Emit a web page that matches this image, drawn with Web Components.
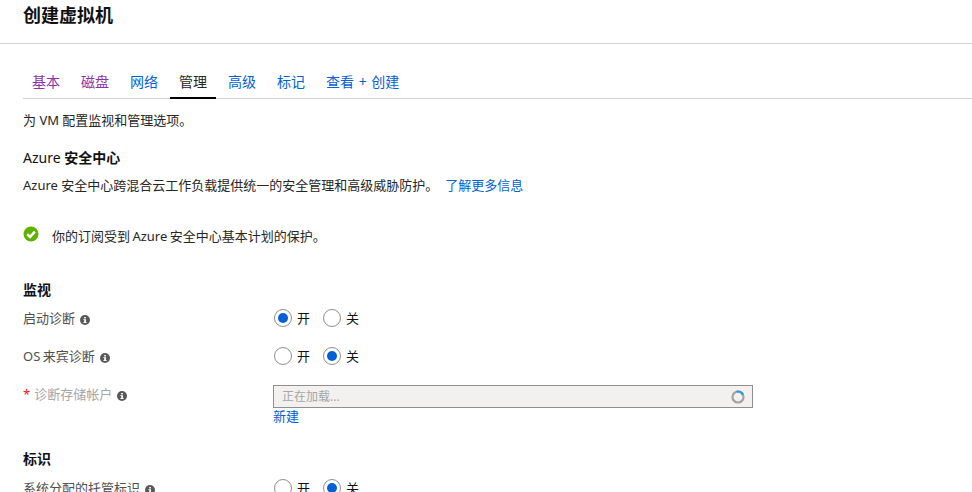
<!DOCTYPE html>
<html lang="zh-CN"><head><meta charset="utf-8">
<style>
html,body{margin:0;height:492px;overflow:hidden;background:#fff}
body{font:13px/18px "Noto Sans","Noto Sans CJK SC",sans-serif;color:#262626}
</style></head><body>
<vm-page>
  <vm-header slot="header">创建虚拟机</vm-header>
  <vm-tabs>
    <vm-tab state="visited">基本</vm-tab><vm-tab state="visited">磁盘</vm-tab><vm-tab>网络</vm-tab><vm-tab state="active">管理</vm-tab><vm-tab>高级</vm-tab><vm-tab>标记</vm-tab><vm-tab style="word-spacing:1px">查看 + 创建</vm-tab>
  </vm-tabs>
  <vm-content>
    <vm-text style="margin-top:12px">为 VM 配置监视和管理选项。</vm-text>
    <vm-heading style="margin-top:20px"><span style="font-weight:400">Azure</span> 安全中心</vm-heading>
    <vm-text style="margin-top:9px">Azure 安全中心跨混合云工作负载提供统一的安全管理和高级威胁防护。<vm-link style="margin-left:7px">了解更多信息</vm-link></vm-text>
    <vm-status style="margin-top:32px;word-spacing:-1px">你的订阅受到 Azure 安全中心基本计划的保护。</vm-status>
    <vm-heading style="margin-top:36px">监视</vm-heading>
    <vm-row style="margin-top:10px" label="启动诊断" value="on"></vm-row>
    <vm-row style="margin-top:20px;word-spacing:-1px" label="OS 来宾诊断" value="off"></vm-row>
    <vm-row style="margin-top:20px" label="诊断存储帐户" required disabled>
      <vm-loading>正在加载...</vm-loading>
      <vm-link style="display:block;margin:-1px 0 0 -1px">新建</vm-link>
    </vm-row>
    <vm-heading style="margin-top:25px">标识</vm-heading>
    <vm-row style="margin-top:11px" label="系统分配的托管标识" value="off"></vm-row>
  </vm-content>
</vm-page>
<script>
const def=(n,css,html,extra)=>{customElements.define(n,class extends HTMLElement{
  constructor(){super();this.attachShadow({mode:'open'}).innerHTML=`<style>${css}</style>${html}`;}
  connectedCallback(){extra&&extra.call(this,this.shadowRoot)}
})};
const info=`<svg viewBox="0 0 11 11" width="10" height="10" style="flex:none;margin-top:3px"><circle cx="5.5" cy="5.5" r="5.5" fill="#595959"/><rect x="4.6" y="4.6" width="1.9" height="3.9" fill="#fff"/><rect x="4.6" y="2.2" width="1.9" height="1.6" fill="#fff"/><rect x="3.7" y="4.6" width="1.2" height=".9" fill="#fff"/><rect x="3.7" y="7.8" width="3.6" height="1" fill="#fff"/></svg>`;
def('vm-page',':host{display:block}','<slot name="header"></slot><slot></slot>');
def('vm-header',':host{display:block;box-sizing:border-box;border-bottom:1px solid #d2d2d2;padding:3px 23px 0;font-size:18px;line-height:24px;font-weight:600;color:#111;height:44px}','<slot></slot>');
def('vm-tabs',':host{display:flex;margin:23px 0 0 23px;height:31px;box-sizing:content-box;border-bottom:1px solid #d2d2d2;gap:3px}','<slot></slot>');
def('vm-tab',`:host{display:block;padding:5px 9px 0;height:31px;box-sizing:border-box;font-size:14px;line-height:20px;color:#0560d6;white-space:nowrap}
:host([state=visited]){color:#8a34a8}
:host([state=active]){color:#262626;border-bottom:2px solid #000;height:32px}`,'<slot></slot>');
def('vm-content',':host{display:block;padding-left:23px}','<slot></slot>');
def('vm-text',':host{display:block;white-space:nowrap}','<slot></slot>');
def('vm-heading',':host{display:block;font-size:14px;font-weight:600;color:#111}','<slot></slot>');
def('vm-link',':host{color:#0560d6}','<slot></slot>');
def('vm-status',':host{display:flex;align-items:flex-start;gap:13px}.t{padding-top:1px}',
 `<svg viewBox="0 0 16 16" width="16" height="16" style="flex:none"><circle cx="8" cy="8" r="7.5" fill="#5fb100"/><path d="M4.2 8.2 7 10.9 11.9 5.6" fill="none" stroke="#fff" stroke-width="2.5"/></svg><span class="t"><slot></slot></span>`);
def('vm-radio',`:host{display:inline-flex;align-items:center;gap:5px;color:#111}
.c{width:18px;height:18px;border:1px solid #8f8f8f;border-radius:50%;box-sizing:border-box;display:flex;align-items:center;justify-content:center;background:#fff}
:host([checked]) .c::after{content:"";width:10px;height:10px;border-radius:50%;background:#0560d6}`,'<span class="c"></span><slot></slot>');
def('vm-row',`:host{display:grid;grid-template-columns:251px 1fr}
.l{display:flex;align-items:center;align-self:start;gap:5px;height:18px;color:#505050}
.l.d{color:#a6a6a6}
.s{color:#e81123;margin-right:-1px}
.v{min-width:0}.r{display:flex;gap:13px;height:18px;align-items:center}`,
`<div class="l"></div><div class="v"></div>`,
function(r){
  const l=r.querySelector('.l');
  if(this.hasAttribute('disabled'))l.classList.add('d');
  l.innerHTML=(this.hasAttribute('required')?'<span class="s">*</span>':'')+`<span>${this.getAttribute('label')}</span>`+info;
  const v=r.querySelector('.v');
  const val=this.getAttribute('value');
  if(val){v.innerHTML=`<div class="r"><vm-radio ${val==='on'?'checked':''}>开</vm-radio><vm-radio ${val==='off'?'checked':''}>关</vm-radio></div>`}
  else v.innerHTML='<slot></slot>';
});
def('vm-loading',`:host{display:flex;align-items:center;justify-content:space-between;width:480px;height:23px;box-sizing:border-box;border:1px solid #8f8f8f;margin-left:-1px;background:#f2f1ef;color:#a6a6a6;font-size:12px;padding:0 7px 0 8px}`,
`<slot></slot><svg viewBox="0 0 14 14" width="14" height="14"><circle cx="7" cy="7" r="5.5" fill="none" stroke="#a3a3a3" stroke-width="2.2"/><path d="M5.5 1.7A5.5 5.5 0 0 1 12 4.7" fill="none" stroke="#2f9bd8" stroke-width="2.2"/></svg>`);
</script>
</body></html>
